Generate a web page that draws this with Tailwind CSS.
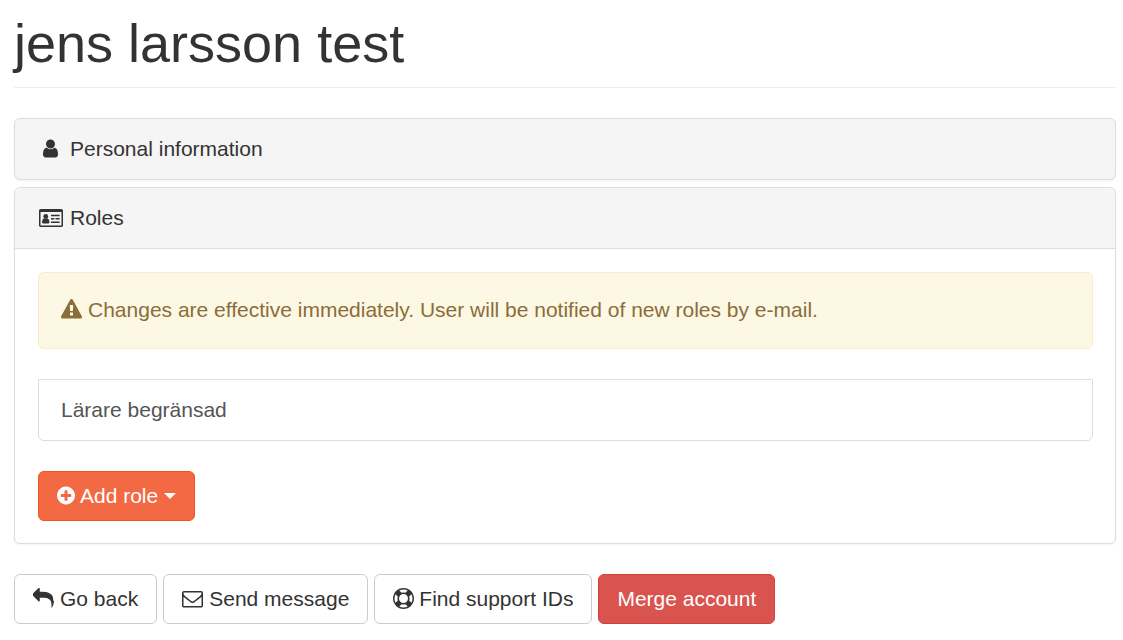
<!DOCTYPE html>
<html lang="en">
<head>
<meta charset="utf-8">
<meta name="viewport" content="width=device-width, initial-scale=1">
<title>jens larsson test</title>
<script src="https://cdn.jsdelivr.net/npm/@tailwindcss/browser@4"></script>
</head>
<body class="bg-white pt-[14px] pr-[7px] pb-4 pl-[14px] font-['Liberation_Sans',Arial,sans-serif] text-[21px] leading-[30px] text-[#333]">
<header class="mb-[30px] border-b border-[#eee] pb-[14px]">
  <h1 class="text-[54px] leading-[59px]">jens larsson test</h1>
</header>
<main>
  <section class="mb-[7px] rounded-md border border-[#ddd] bg-[#f5f5f5] shadow-xs">
    <h2><button type="button" class="flex w-full cursor-pointer items-center gap-[6px] px-[22px] py-[15px] text-left">
      <span class="flex w-[27px] justify-center"><svg class="mb-[2px] size-[21px]" viewBox="0 0 1792 1792" fill="currentColor" aria-hidden="true"><path d="M1536 1399q0 109-62.5 187t-150.5 78h-854q-88 0-150.5-78t-62.5-187q0-85 8.5-160.5t31.5-152 58.5-131 94-89 134.5-34.5q131 128 313 128t313-128q76 0 134.5 34.5t94 89 58.5 131 31.5 152 8.5 160.5zm-256-887q0 159-112.5 271.5t-271.5 112.5-271.5-112.5-112.5-271.5 112.5-271.5 271.5-112.5 271.5 112.5 112.5 271.5z"/></svg></span>
      <span>Personal information</span>
    </button></h2>
  </section>

  <section class="mb-[30px] rounded-md border border-[#ddd] bg-white shadow-xs">
    <h2 class="rounded-t-md border-b border-[#ddd] bg-[#f5f5f5]"><button type="button" class="flex w-full cursor-pointer items-center gap-[6px] px-[22px] py-[15px] text-left">
      <span class="flex w-[27px] justify-center"><svg class="h-[18px] w-[24px]" viewBox="0 0 2048 1536" fill="currentColor" aria-hidden="true"><path fill-rule="evenodd" d="M160 0h1728q66 0 113 47t47 113v1216q0 66-47 113t-113 47h-1728q-66 0-113-47t-47-113v-1216q0-66 47-113t113-47zm-32 256v1120q0 13 9.500 22.500t22.500 9.500h1728q13 0 22.500-9.500t9.500-22.500v-1120z"/><circle cx="576" cy="640" r="205"/><path d="M256 1141q0-270 166-347 65 58 154 58t154-58q166 77 166 347 0 91-90 91h-460q-90 0-90-91z"/><path d="M1024 480h736v128h-736zM1024 768h288v128h-288zM1408 768h352v128h-352zM1024 1056h736v128h-736z"/></svg></span>
      <span>Roles</span>
    </button></h2>
    <div class="px-[22px] pt-[23px] pb-[22px] pl-[23px]">
      <div role="alert" class="mb-[30px] flex items-center gap-[6px] rounded-md border border-[#faebcc] bg-[#fcf8e3] px-[22px] pt-[22px] pb-[23px] text-[#8a6d3b]">
        <svg class="mb-[2px] size-[21px] shrink-0" viewBox="0 0 1792 1792" fill="currentColor" aria-hidden="true"><path d="M1024 1375v-190q0-14-9.500-23.500t-22.500-9.500h-192q-13 0-22.500 9.500t-9.500 23.500v190q0 14 9.500 23.500t22.500 9.500h192q13 0 22.500-9.500t9.500-23.500zm-2-374l18-459q0-12-10-19-13-11-24-11h-220q-11 0-24 11-10 7-10 21l17 457q0 10 10 16.500t24 6.500h185q14 0 23.500-6.500t10.500-16.500zm-14-934l768 1408q35 63-2 126-17 29-46.500 46t-63.500 17h-1536q-34 0-63.500-17t-46.500-46q-37-63-2-126l768-1408q17-31 47-49t65-18 65 18 47 49z"/></svg>
        <p>Changes are effective immediately. User will be notified of new roles by e-mail.</p>
      </div>
      <ul class="mb-[30px] rounded-b-md border border-[#ddd]">
        <li class="px-[22px] py-[15px] text-[#555]">Lärare begränsad</li>
      </ul>
      <button type="button" aria-haspopup="true" class="flex cursor-pointer items-center rounded-md border border-[#f4511e] bg-[#f36943] px-[18px] py-[9px] text-white">
        <svg class="mr-[5px] mb-[2px] h-[21px] w-[18px]" viewBox="128 0 1536 1792" fill="currentColor" aria-hidden="true"><path d="M1344 960v-128q0-26-19-45t-45-19h-256v-256q0-26-19-45t-45-19h-128q-26 0-45 19t-19 45v256h-256q-26 0-45 19t-19 45v128q0 26 19 45t45 19h256v256q0 26 19 45t45 19h128q26 0 45-19t19-45v-256h256q26 0 45-19t19-45zm320-64q0 209-103 385.500t-279.500 279.500-385.500 103-385.500-103-279.500-279.500-103-385.500 103-385.500 279.500-279.500 385.500-103 385.500 103 279.500 279.500 103 385.500z"/></svg>
        Add role
        <svg class="ml-[6px] h-[6px] w-[12px]" viewBox="0 0 12 6" fill="currentColor" aria-hidden="true"><path d="M0 0h12L6 6z"/></svg>
      </button>
    </div>
  </section>

  <div class="flex flex-wrap gap-[6px]">
    <button type="button" class="flex cursor-pointer items-center gap-[6px] rounded-md border border-[#ccc] bg-white px-[18px] py-[9px]">
      <svg class="mb-[2px] size-[21px]" viewBox="0 0 1792 1792" fill="currentColor" aria-hidden="true"><path d="M1792 1120q0 166-127 451-3 7-10.500 24t-13.500 30-13 22q-12 17-28 17-15 0-23.500-10t-8.500-25q0-9 2.500-26.500t2.500-23.500q5-68 5-123 0-112-19.500-200.500t-54-153.500-89-112-117-79-145.500-52-166-27.500-187-8.500h-224v256q0 26-19 45t-45 19-45-19l-512-512q-19-19-19-45t19-45l512-512q19-19 45-19t45 19 19 45v256h224q713 0 875 403 53 134 53 333z"/></svg>
      Go back
    </button>
    <button type="button" class="flex cursor-pointer items-center gap-[6px] rounded-md border border-[#ccc] bg-white px-[18px] py-[9px]">
      <svg class="mb-[2px] size-[21px]" viewBox="0 0 1792 1792" fill="currentColor" aria-hidden="true"><path d="M1664 1504v-768q-32 36-69 66-268 206-426 338-51 43-83 67t-86.500 48.500-102.500 24.500h-2q-48 0-102.500-24.500t-86.500-48.500-83-67q-158-132-426-338-37-30-69-66v768q0 13 9.500 22.500t22.500 9.500h1472q13 0 22.500-9.500t9.500-22.500zm0-1051v-24.500l-.5-13-3-12.500-5.500-9-9-7.500-14-2.500h-1472q-13 0-22.500 9.500t-9.500 22.500q0 168 147 284 193 152 401 317 6 5 35 29.500t46 37.500 44.500 31.500 50.500 27.500 43 9h2q20 0 43-9t50.500-27.500 44.500-31.500 46-37.500 35-29.500q208-165 401-317 54-43 100.500-115.500t46.500-131.500zm128-37v1088q0 66-47 113t-113 47h-1472q-66 0-113-47t-47-113v-1088q0-66 47-113t113-47h1472q66 0 113 47t47 113z"/></svg>
      Send message
    </button>
    <button type="button" class="flex cursor-pointer items-center gap-[5px] rounded-md border border-[#ccc] bg-white px-[18px] py-[9px]">
      <svg class="mb-[2px] size-[21px]" viewBox="0 0 1792 1792" fill="currentColor" aria-hidden="true"><path d="M896 0q182 0 348 71t286 191 191 286 71 348-71 348-191 286-286 191-348 71-348-71-286-191-191-286-71-348 71-348 191-286 286-191 348-71zm0 128q-190 0-361 90l194 194q82-28 167-28t167 28l194-194q-171-90-361-90zm-678 1129l194-194q-28-82-28-167t28-167l-194-194q-90 171-90 361t90 361zm678 407q190 0 361-90l-194-194q-82 28-167 28t-167-28l-194 194q171 90 361 90zm0-384q159 0 271.500-112.500t112.500-271.500-112.500-271.500-271.500-112.500-271.500 112.500-112.500 271.500 112.500 271.500 271.500 112.500zm484-217l194 194q90-171 90-361t-90-361l-194 194q28 82 28 167t-28 167z"/></svg>
      Find support IDs
    </button>
    <button type="button" class="flex cursor-pointer items-center rounded-md border border-[#d43f3a] bg-[#d9534f] px-[18px] py-[9px] text-white">Merge account</button>
  </div>
</main>
</body>
</html>
